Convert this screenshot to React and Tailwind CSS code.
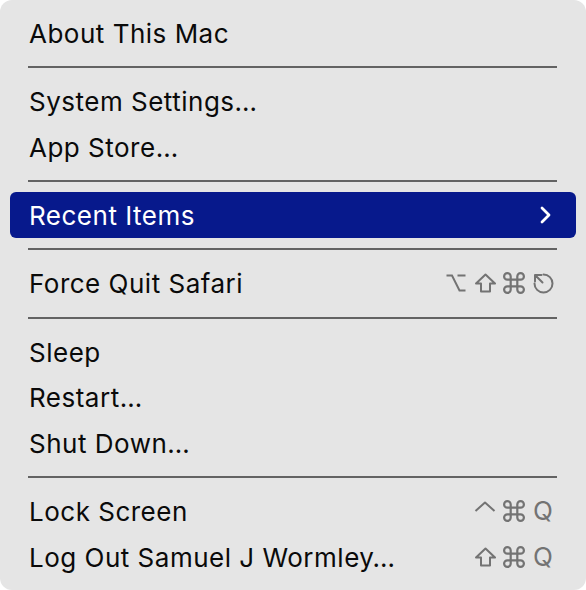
import React from 'react';

const Glyph = ({ children, w = 22 }) => (
  <svg
    width={w}
    height="22"
    viewBox={`0 0 ${w} 22`}
    fill="none"
    stroke="#737373"
    strokeWidth="2"
    strokeLinecap="round"
    strokeLinejoin="round"
  >
    {children}
  </svg>
);

const OptionKey = () => (
  <Glyph>
    <path d="M1.5 3.5H7L14.5 18.5H20.5M12.5 3.5H20.5" strokeLinecap="butt" strokeLinejoin="miter" />
  </Glyph>
);

const ShiftKey = () => (
  <Glyph>
    <path d="M11.5 2.5L21 11.5H16V19.5H7V11.5H2Z" />
  </Glyph>
);

const CommandKey = () => (
  <svg width="22" height="22" viewBox="2 2 20 20" fill="none" stroke="#737373" strokeWidth="2">
    <path d="M15 6v12a3 3 0 1 0 3-3H6a3 3 0 1 0 3 3V6a3 3 0 1 0-3 3h12a3 3 0 1 0-3-3" />
  </svg>
);

const EscapeKey = () => (
  <Glyph>
    <path d="M11.5 2.5A9 9 0 1 1 2.5 11.5" />
    <path d="M3 3L10.5 10.5M3 3V9.5M3 3H9.5" />
  </Glyph>
);

const ControlKey = () => (
  <Glyph>
    <path d="M1.5 11L11 2.5L20.5 11" strokeLinecap="butt" />
  </Glyph>
);

const Cell = ({ children }) => (
  <div className="w-[22px] flex justify-center items-center">{children}</div>
);

const Shortcut = ({ keys }) => (
  <div className="flex items-center gap-[7px]">
    {keys.map((k, i) => (
      <Cell key={i}>{k}</Cell>
    ))}
  </div>
);

const QKey = () => <span className="text-[26px] leading-none text-[#737373]">Q</span>;

const Row = ({ label, shortcut, highlighted, submenu }) => (
  <div
    className={`h-[45.6px] flex items-center justify-between pl-[19px] pr-[22px] rounded-[6px] ${
      highlighted ? 'bg-[#07198c] text-white' : 'text-[#0a0a0a]'
    }`}
  >
    <span className="text-[26px] leading-none tracking-[0.5px] pt-[2px]">{label}</span>
    {shortcut}
    {submenu && (
      <svg width="14" height="20" viewBox="0 0 14 20" fill="none" stroke="white" strokeWidth="2.8" strokeLinecap="round" strokeLinejoin="round" className="mr-[2px]">
        <path d="M4 3L11 10L4 17" />
      </svg>
    )}
  </div>
);

const Separator = () => (
  <div className="h-[22.6px] flex items-center pl-[18px] pr-[19px]">
    <div className="h-[2px] w-full bg-[#636363]" />
  </div>
);

export default function App() {
  return (
    <div className="w-[586px] h-[590px] bg-white" style={{ fontFamily: 'Inter, "Noto Sans", sans-serif' }}>
      <div className="h-full rounded-[12px] bg-[#e5e5e5] px-[10px] pt-[10.5px]">
        <Row label="About This Mac" />
        <Separator />
        <Row label="System Settings…" />
        <Row label="App Store…" />
        <Separator />
        <Row label="Recent Items" highlighted submenu />
        <Separator />
        <Row
          label="Force Quit Safari"
          shortcut={<Shortcut keys={[<OptionKey />, <ShiftKey />, <CommandKey />, <EscapeKey />]} />}
        />
        <Separator />
        <Row label="Sleep" />
        <Row label="Restart…" />
        <Row label="Shut Down…" />
        <Separator />
        <Row label="Lock Screen" shortcut={<Shortcut keys={[<ControlKey />, <CommandKey />, <QKey />]} />} />
        <Row
          label="Log Out Samuel J Wormley…"
          shortcut={<Shortcut keys={[<ShiftKey />, <CommandKey />, <QKey />]} />}
        />
      </div>
    </div>
  );
}
